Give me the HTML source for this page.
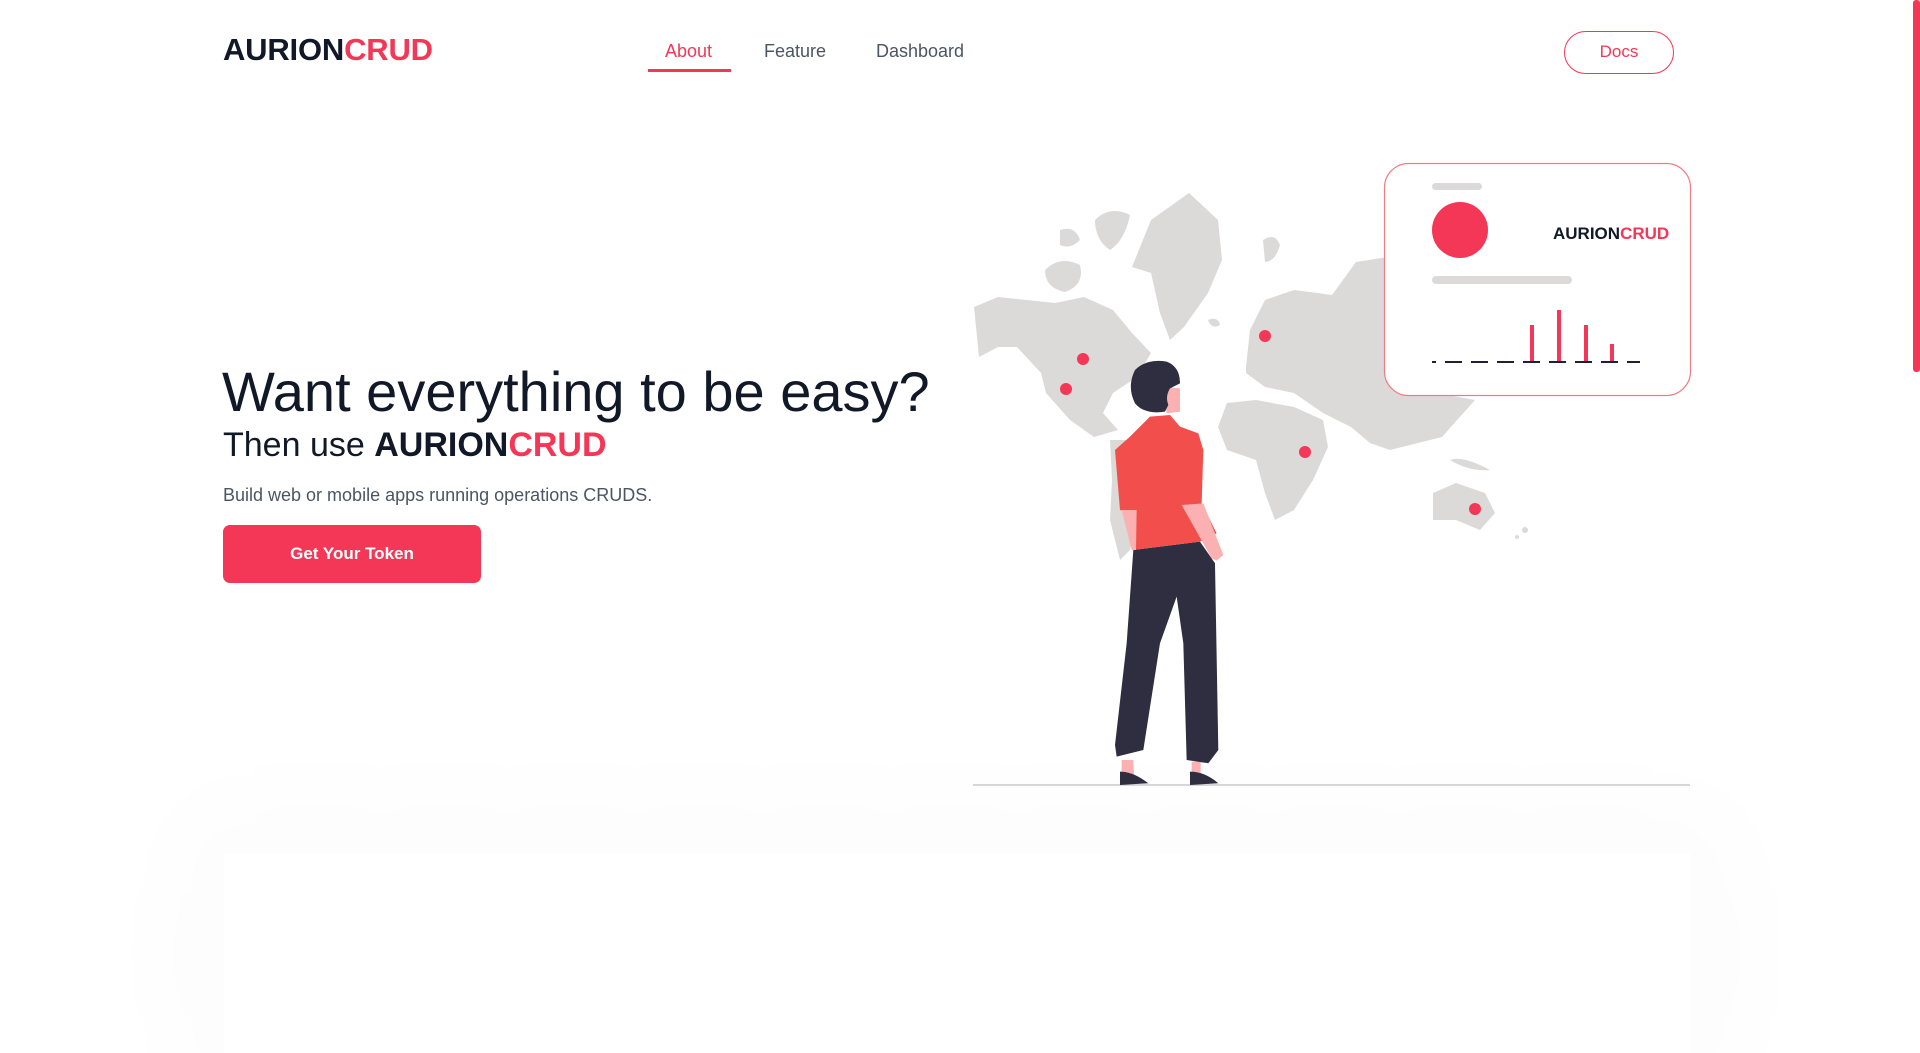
<!DOCTYPE html>
<html><head><meta charset="utf-8"><style>
*{margin:0;padding:0;box-sizing:border-box}
body{width:1920px;height:909px;overflow:hidden;background:#fff;font-family:"Liberation Sans",sans-serif;position:relative}
.logo{position:absolute;left:223px;top:32px;font-weight:bold;font-size:31px;color:#111827;letter-spacing:-0.2px}
.r{color:#f43756}
.nav{position:absolute;top:41px;font-size:18px;color:#4b5563}
.ul{position:absolute;left:648px;top:69px;width:83px;height:3px;background:#f43756}
.docs{position:absolute;left:1564px;top:31px;width:110px;height:43px;border:1px solid #f43756;border-radius:22px;color:#f43756;font-size:17px;text-align:center;line-height:40px}
.scroll{position:absolute;left:1913px;top:0;width:7px;height:372px;background:#f43756;border-radius:3px}
h1{position:absolute;left:222px;top:359px;font-size:56px;font-weight:normal;color:#111827;white-space:nowrap}
h2{position:absolute;left:223px;top:426px;font-size:34px;font-weight:normal;color:#111827;white-space:nowrap}
h2 b{font-weight:bold}
.sub{position:absolute;left:223px;top:485px;font-size:18px;color:#4b5563}
.btn{position:absolute;left:223px;top:525px;width:258px;height:58px;background:#f43756;border-radius:7px;color:#fff;font-weight:bold;font-size:17px;text-align:center;line-height:58px}
.bottom{position:absolute;left:224px;top:853px;width:1466px;height:200px;background:#fff;box-shadow:0 0 220px 40px rgba(0,0,0,0.018)}
svg{position:absolute;left:0;top:0}
</style></head><body>
<div class="bottom"></div>
<div class="logo">AURION<span class="r">CRUD</span></div>
<div class="nav" style="left:665px;color:#f43756">About</div>
<div class="nav" style="left:764px">Feature</div>
<div class="nav" style="left:876px">Dashboard</div>
<div class="ul"></div>
<div class="docs">Docs</div>
<div class="scroll"></div>
<h1>Want everything to be easy?</h1>
<h2>Then use <b>AURION<span class="r">CRUD</span></b></h2>
<div class="sub">Build web or mobile apps running operations CRUDS.</div>
<div class="btn">Get Your Token</div>
<svg width="1920" height="909" viewBox="0 0 1920 909">
<g fill="#dcd9d9">
<path d="M974,307 L998,297 L1055,303 L1084,297 L1113,310 L1132,333 L1151,353 L1137,377 L1113,393 L1103,413 L1118,430 L1094,437 L1070,420 L1046,393 L1041,373 L1017,347 L998,347 L979,357 Z"/>
<path d="M1132,267 L1151,220 L1189,193 L1218,220 L1222,260 L1208,293 L1184,327 L1170,340 L1160,313 L1151,273 Z"/>
<path d="M1095,220 Q1110,205 1130,215 Q1125,240 1110,250 Q1095,240 1095,220 Z"/>
<path d="M1045,270 Q1060,255 1080,265 Q1085,285 1065,292 Q1045,288 1045,270 Z"/>
<path d="M1060,230 Q1075,225 1080,240 Q1070,250 1060,245 Z"/>
<path d="M1110,440 L1140,440 L1150,470 L1140,510 L1130,550 L1120,560 L1110,520 L1112,480 Z"/>
<path d="M1246,367 L1250,330 L1265,300 L1294,290 L1332,295 L1356,262 L1400,255 L1480,280 L1480,395 L1437,393 L1475,400 L1442,437 L1390,450 L1370,443 L1351,427 L1323,413 L1294,393 L1265,387 L1246,373 Z"/>
<path d="M1227,403 L1256,400 L1294,407 L1323,420 L1328,447 L1313,480 L1294,510 L1275,520 L1265,493 L1256,460 L1227,450 L1218,427 Z"/>
<path d="M1433,493 L1456,483 L1485,493 L1495,513 L1480,530 L1456,520 L1433,520 Z"/>
<path d="M1263,240 Q1275,232 1280,245 Q1275,262 1265,262 Z"/>
<path d="M1208,320 Q1218,316 1220,325 Q1212,330 1208,320 Z"/>
<path d="M1450,460 Q1462,455 1490,470 Q1470,472 1450,460 Z"/>
<circle cx="1525" cy="530" r="3"/><circle cx="1517" cy="537" r="2"/>
</g>
<g fill="#f43756">
<circle cx="1083" cy="359" r="6"/><circle cx="1066" cy="389" r="6"/><circle cx="1265" cy="336" r="6"/><circle cx="1305" cy="452" r="6"/><circle cx="1475" cy="509" r="6"/>
</g>
<rect x="1384.5" y="163.5" width="306" height="232" rx="24" fill="#fff" stroke="#f07c86" stroke-width="1.2"/>
<rect x="1432" y="183" width="50" height="7" rx="3.5" fill="#dcd9d9"/>
<circle cx="1460" cy="230" r="28" fill="#f43756"/>
<text x="1553" y="239" font-family="Liberation Sans" font-weight="bold" font-size="17" fill="#111827">AURION<tspan fill="#f43756">CRUD</tspan></text>
<rect x="1432" y="276" width="140" height="8" rx="4" fill="#dcd9d9"/>
<g fill="#f43756"><rect x="1530" y="325" width="4" height="37"/><rect x="1557" y="310" width="4" height="52"/><rect x="1584" y="325" width="4" height="37"/><rect x="1610" y="344" width="4" height="18"/></g>
<line x1="1432" y1="362" x2="1640" y2="362" stroke="#1f2033" stroke-width="2" stroke-dasharray="4 9 13 0"/>
<line x1="1432" y1="362" x2="1640" y2="362" stroke="#1f2033" stroke-width="2" stroke-dasharray="0 13 13 0"/>
<line x1="973" y1="785" x2="1690" y2="785" stroke="#c9c9cb" stroke-width="1.5"/>
<g transform="translate(1080,350) scale(0.3333)">
<path d="M125,1230 L160,1230 L162,1275 L125,1275 Z M335,1235 L362,1235 L362,1275 L335,1275 Z" fill="#fbb1b1"/>
<path d="M120,1265 Q160,1265 205,1300 L120,1305 Z M330,1265 Q375,1265 415,1300 L330,1305 Z" fill="#2f2e41"/>
<path d="M160,600 L360,575 L405,640 L415,1200 L385,1240 L320,1230 L310,880 L290,740 L240,880 L190,1200 L110,1220 L105,1185 L140,880 Z" fill="#2f2e41"/>
<path d="M105,300 L150,260 L210,200 L270,195 L300,230 L355,250 L370,300 L365,460 L410,550 L360,575 L160,600 L155,490 L120,480 Z" fill="#f24e4c"/>
<path d="M305,465 L370,460 L430,615 L410,632 L395,625 Z M125,480 L170,480 L168,600 L155,600 Z" fill="#fbb1b1"/>
<path d="M250,110 L300,115 L300,185 L260,190 Z" fill="#fbb1b1"/>
<path d="M165,60 Q200,25 260,35 Q300,50 300,100 L270,115 Q255,140 265,165 L255,185 Q195,195 165,160 Q140,110 165,60 Z" fill="#2f2e41"/>
</g>
</svg>
</body></html>
